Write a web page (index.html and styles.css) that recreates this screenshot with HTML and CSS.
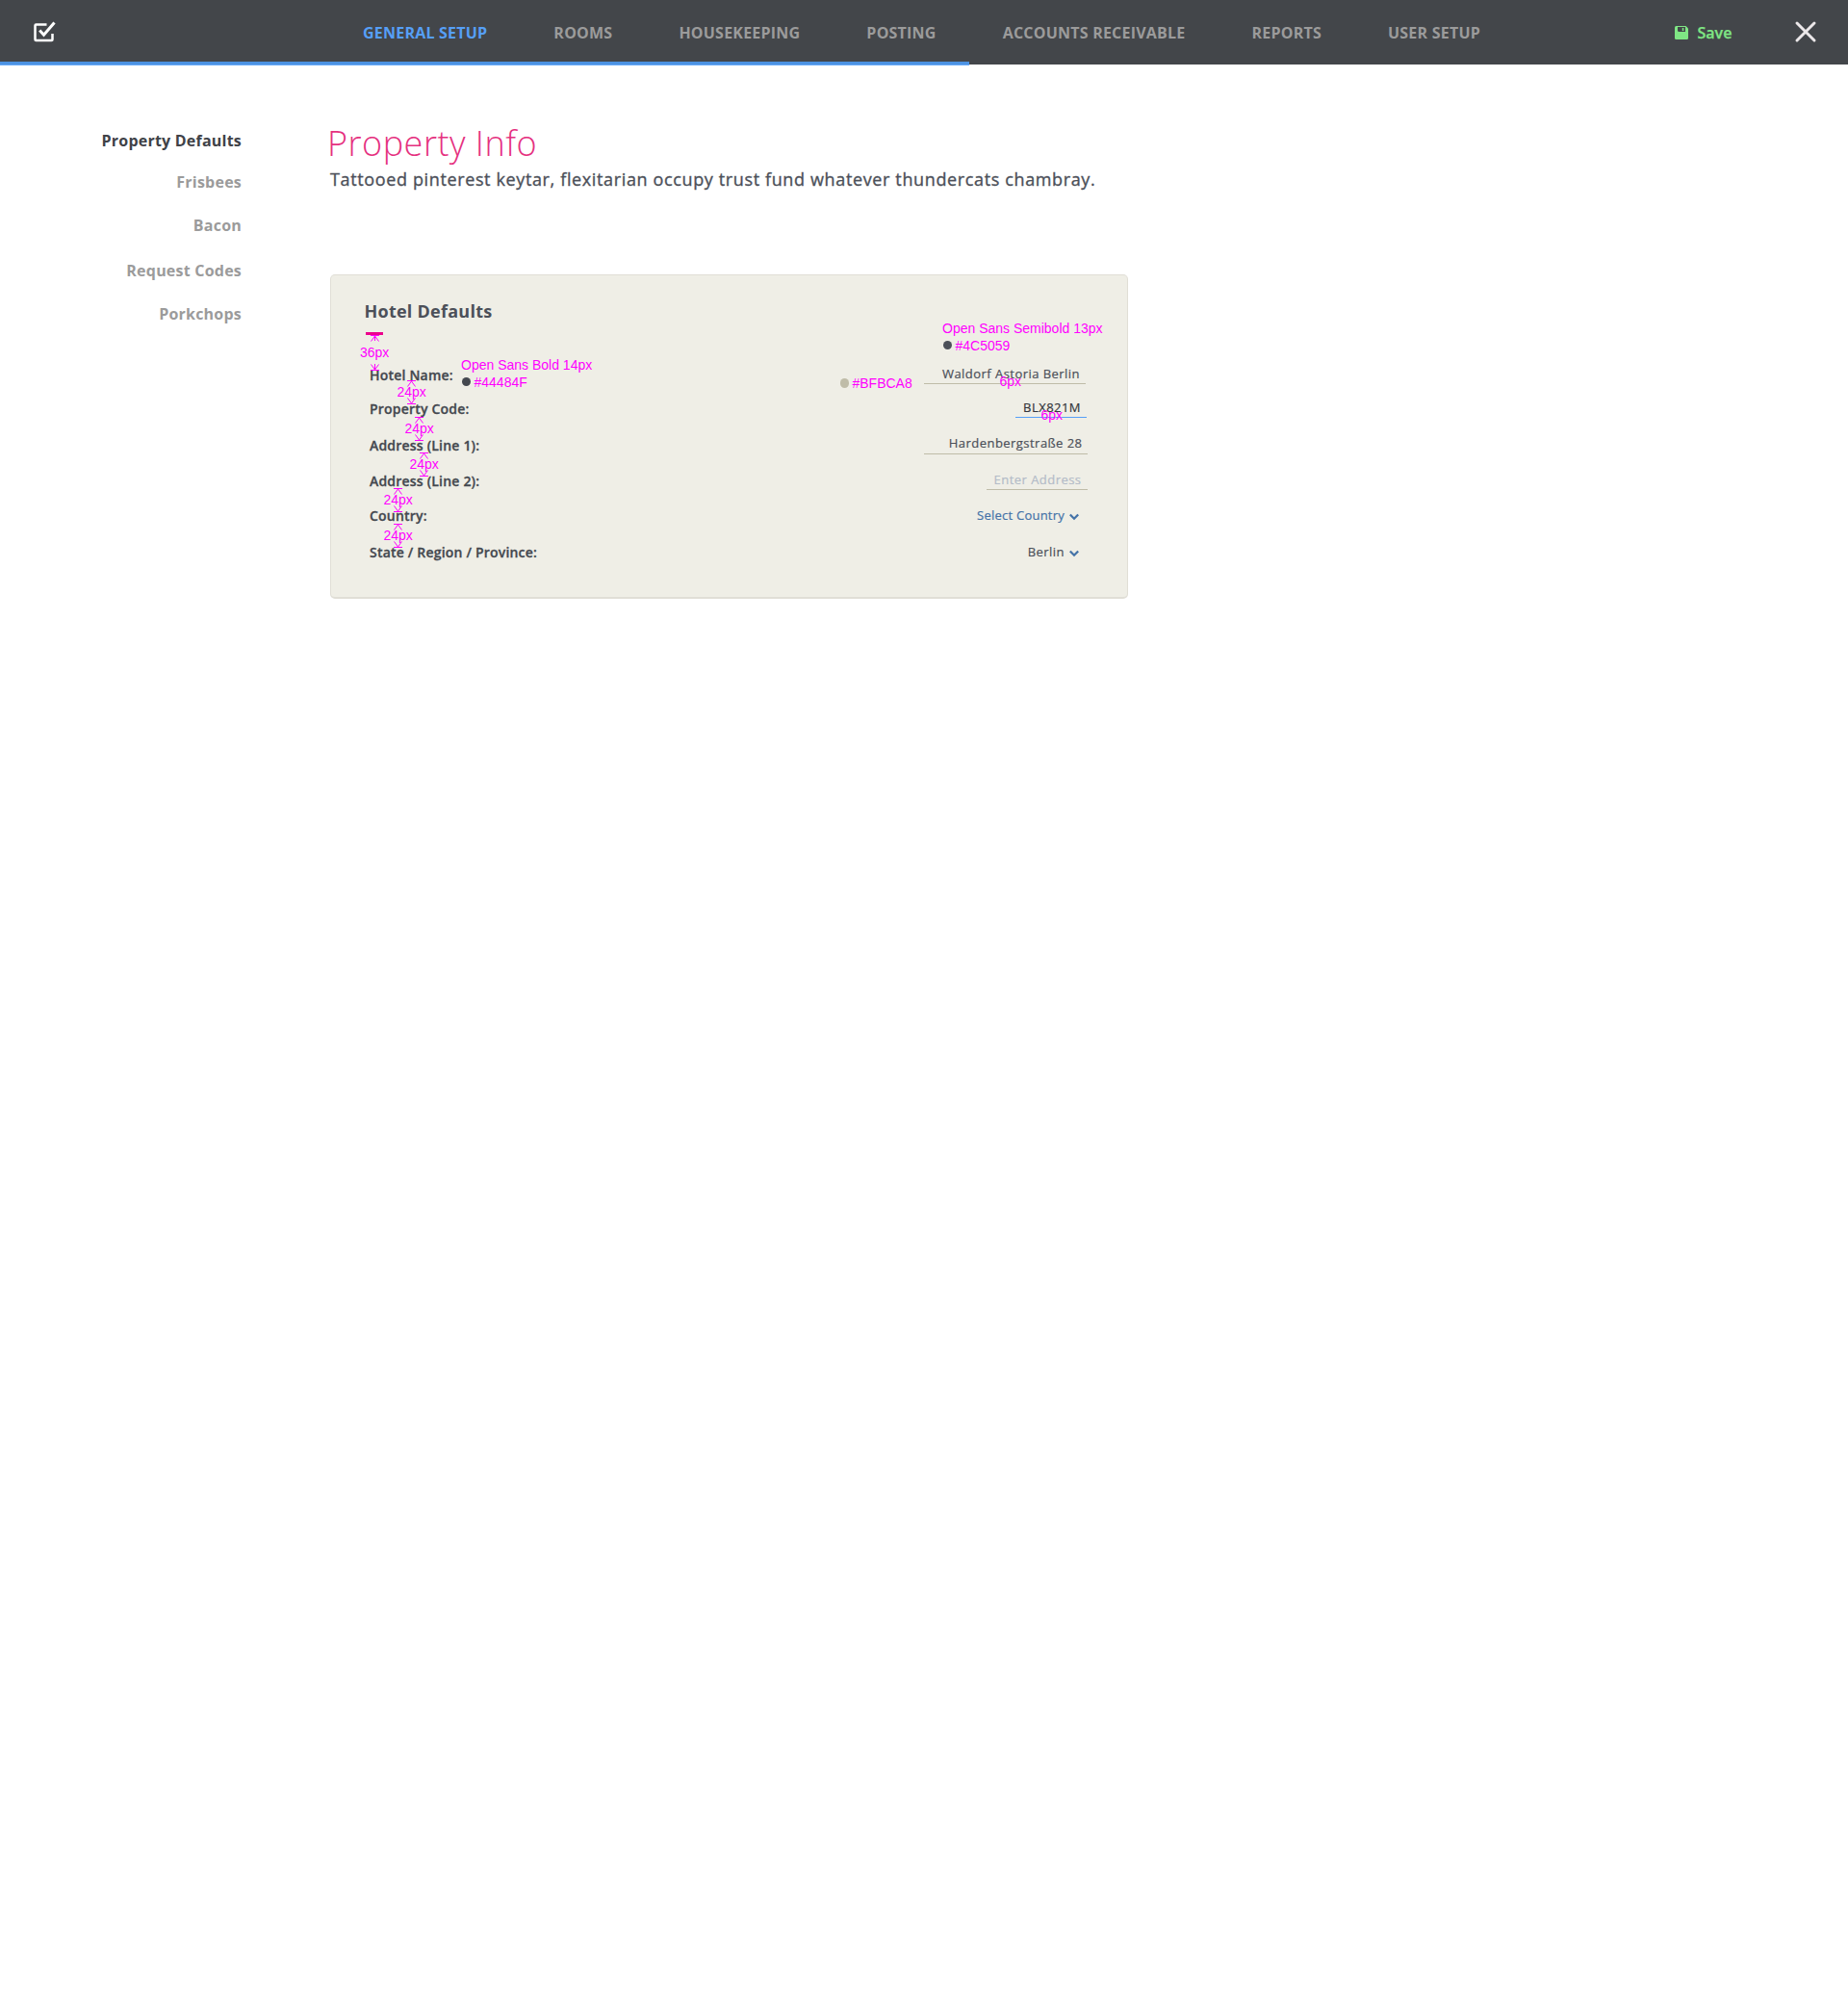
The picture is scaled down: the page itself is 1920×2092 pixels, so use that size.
FILE: index.html
```
<!DOCTYPE html>
<html lang="en">
<head>
<meta charset="utf-8">
<title>Property Info</title>
<link rel="stylesheet" href="styles.css">
</head>
<body>
<header class="topbar">
  <svg class="logo" width="26" height="28" viewBox="0 0 26 28" fill="none" stroke="#fff">
    <path d="M14.500 5.500H3.500Q2.500 5.500 2.500 6.500V21Q2.500 22 3.500 22H19.500Q20.500 22 20.500 21V15" stroke-width="2.500"/>
    <path d="M7.200 11.500L11.500 16.200L22.500 3.500" stroke-width="3"/>
  </svg>
  <nav class="tabs">
    <a class="tab tab-active">GENERAL SETUP</a>
    <a class="tab">ROOMS</a>
    <a class="tab">HOUSEKEEPING</a>
    <a class="tab">POSTING</a>
    <a class="tab">ACCOUNTS RECEIVABLE</a>
    <a class="tab">REPORTS</a>
    <a class="tab">USER SETUP</a>
  </nav>
  <a class="save">
    <svg width="14" height="14" viewBox="0 0 14 14"><path d="M1.500 0H11.500L14 2.500V12.500Q14 14 12.500 14H1.500Q0 14 0 12.500V1.500Q0 0 1.500 0Z" fill="#7fe684"/><path d="M3 1H11V6H4.500Q3 6 3 4.500Z" fill="#43464a"/><rect x="7.800" y="2" width="1.500" height="3" fill="#7fe684"/></svg>
    <span>Save</span>
  </a>
  <svg class="close" width="24" height="24" viewBox="0 0 24 24"><path d="M3 3L21 21M21 3L3 21" stroke="#ece8ea" stroke-width="3" stroke-linecap="round"/></svg>
  <div class="progress"></div>
</header>
<div class="page">
  <aside class="side">
    <a class="side-item side-active">Property Defaults</a>
    <a class="side-item">Frisbees</a>
    <a class="side-item">Bacon</a>
    <a class="side-item">Request Codes</a>
    <a class="side-item">Porkchops</a>
  </aside>
  <main class="content">
    <h1>Property Info</h1>
    <p class="tagline">Tattooed pinterest keytar, flexitarian occupy trust fund whatever thundercats chambray.</p>
    <section class="card">
      <h2>Hotel Defaults</h2>
      <div class="accent"></div>
      <div class="row r1"><span class="label">Hotel Name:</span><span class="value field">Waldorf Astoria Berlin</span></div>
      <div class="row r2"><span class="label">Property Code:</span><span class="value field">BLX821M</span></div>
      <div class="row r3"><span class="label">Address (Line 1):</span><span class="value field">Hardenbergstraße 28</span></div>
      <div class="row r4"><span class="label">Address (Line 2):</span><span class="value field">Enter Address</span></div>
      <div class="row r5"><span class="label">Country:</span><span class="value select">Select Country<svg width="10" height="8" viewBox="0 0 10 8"><path d="M.8 1.500L5 5.700L9.200 1.500"/></svg></span></div>
      <div class="row r6"><span class="label">State / Region / Province:</span><span class="value select">Berlin<svg width="10" height="8" viewBox="0 0 10 8"><path d="M.8 1.500L5 5.700L9.200 1.500"/></svg></span></div>
    </section>
  </main>
</div>
<div class="notes">
  <svg class="arrows" width="1200" height="640" viewBox="0 0 1200 640">
    <defs>
      <path id="up" d="M-4.500 .5H4.500M-4 6.500L0 1L4 6.500"/>
      <path id="down" d="M-4.500 -.5H4.500M-4 -6.500L0 -1L4 -6.500"/>
      <path id="stem" d="M0 0V6"/>
    </defs>
    <use href="#up" x="389.500" y="348"/><use href="#stem" x="389.500" y="348"/>
    <use href="#down" x="389.500" y="385"/><use href="#stem" x="389.500" y="378"/>
    <use href="#up" x="427.500" y="395"/><use href="#down" x="427.500" y="420"/>
    <use href="#up" x="435.500" y="433"/><use href="#down" x="435.500" y="458"/>
    <use href="#up" x="440.500" y="470"/><use href="#down" x="440.500" y="495"/>
    <use href="#up" x="413.500" y="507"/><use href="#down" x="413.500" y="532"/>
    <use href="#up" x="413.500" y="544"/><use href="#down" x="413.500" y="569"/>
  </svg>
  <span class="note n1">36px</span>
  <span class="note n2">24px</span>
  <span class="note n3">24px</span>
  <span class="note n4">24px</span>
  <span class="note n5">24px</span>
  <span class="note n6">24px</span>
  <span class="note n7">Open Sans Bold 14px</span>
  <i class="dot d1"></i><span class="note n8">#44484F</span>
  <span class="note n9">Open Sans Semibold 13px</span>
  <i class="dot d2"></i><span class="note n10">#4C5059</span>
  <i class="dot d3"></i><span class="note n11">#BFBCA8</span>
  <span class="note n12">6px</span>
  <span class="note n13">6px</span>
</div>
</body>
</html>
```
FILE: styles.css
```
* { box-sizing: border-box; }
body { margin: 0; position: relative; background: #fff; font-family: "Open Sans", sans-serif; color: #44484f; }
h1, h2, p { margin: 0; }

.topbar { position: relative; height: 67px; background: #43464a; display: flex; align-items: flex-start; padding-left: 34px; }
.logo { flex: none; margin-top: 20px; }
.tabs { display: flex; gap: 69px; margin: 23px 0 0 317px; width: 1162px; }
.tab { font-size: 16px; line-height: 22px; font-weight: 700; letter-spacing: .22px; color: #9b9b9b; white-space: nowrap; }
.tab-active { color: #569ff7; }
.save { display: flex; align-items: flex-start; margin: 23px 0 0 201px; color: #7fe684; font-size: 16px; font-weight: 600; line-height: 22px; -webkit-text-stroke: .25px; }
.save svg { margin: 4px 9.5px 0 0; }
.close { position: absolute; left: 1864px; top: 21px; }
.progress { position: absolute; left: 0; top: 64px; width: 1007px; height: 4px; background: #4c92e2; border-bottom: 1px solid #69aaf8; }

.page { display: flex; height: 2025px; }
.side { width: 251px; padding-top: 68px; display: flex; flex-direction: column; align-items: flex-end; }
.side-item { font-size: 16px; line-height: 22px; font-weight: 700; letter-spacing: .22px; color: #9b9b9b; margin-bottom: 23px; }
.side-item:nth-child(1) { margin-bottom: 21px; }
.side-item:nth-child(3) { margin-bottom: 25px; }
.side-active { color: #404247; }

.content { margin-left: 92px; padding-top: 57px; }
h1 { margin-left: -3px; font-size: 36px; line-height: 49px; font-weight: 300; letter-spacing: .5px; color: #e5317f; }
.tagline { margin-top: 1px; font-size: 18px; line-height: 25px; letter-spacing: .632px; color: #4c5059; -webkit-text-stroke: .35px; }

.card { margin-top: 86px; width: 829px; height: 337px; background: #efeee6; border: 1px solid #e0ded6; border-bottom-width: 2px; border-radius: 5px; padding: 25px 41px 0 35px; }
h2 { margin-left: -.5px; font-size: 18px; line-height: 25px; font-weight: 700; letter-spacing: .25px; color: #4c5059; }
.accent { width: 18px; height: 3px; margin: 9px 0 32px 1px; background: #ec008c; }
.row { display: flex; justify-content: space-between; align-items: flex-start; padding-left: 5px; }
.label { font-size: 14px; line-height: 20px; font-weight: 600; letter-spacing: .2px; -webkit-text-stroke: .3px; }
.value { font-size: 13px; line-height: 20px; letter-spacing: .46px; color: #4c5059; text-align: right; -webkit-text-stroke: .2px; }
.field { border-bottom: 1px solid #bfbca8; padding-right: 6px; }
.r1 { height: 35px; }
.r2 { height: 38px; }
.r3 { height: 37px; }
.r4 { height: 36px; }
.r5 { height: 38px; }
.r1 .value { width: 168px; margin: -2px 2px 0 0; }
.r2 .value { width: 74px; margin: -2px 1px 0 0; color: #33363b; border-color: #569ff7; }
.r3 .value { width: 170px; margin-top: -3px; padding: 0 5.500px 1px 0; }
.r4 .value { width: 105px; margin-top: -2px; padding-right: 6.500px; color: #b4bcc8; }
.select { display: flex; margin: -1px 9px 0 0; }
.select svg { margin: 8px 0 0 5px; fill: none; stroke: #4573a8; stroke-width: 2.300; }
.r5 .value { color: #4573a8; letter-spacing: .23px; }

.notes { position: absolute; left: 0; top: 0; }
.arrows { position: absolute; left: 0; top: 0; fill: none; stroke: #f0f; stroke-width: 1; }
.note { position: absolute; font: 14px/16px "Liberation Sans", sans-serif; color: #f0f; white-space: nowrap; }
.n1 { left: 374px; top: 358px; }
.n2 { left: 412.500px; top: 399px; }
.n3 { left: 420.500px; top: 437px; }
.n4 { left: 425.500px; top: 474px; }
.n5 { left: 398.500px; top: 511px; }
.n6 { left: 398.500px; top: 548px; }
.n7 { left: 479px; top: 371px; }
.n8 { left: 492.500px; top: 389px; }
.n9 { left: 979px; top: 333px; }
.n10 { left: 992.500px; top: 351px; }
.n11 { left: 885.500px; top: 390px; }
.n12 { left: 1038.500px; top: 388px; }
.n13 { left: 1081.500px; top: 423px; }
.dot { position: absolute; width: 9.500px; height: 9.500px; border-radius: 50%; }
.d1 { left: 479.800px; top: 391.800px; background: #44484f; }
.d2 { left: 979.800px; top: 353.800px; background: #4c5059; }
.d3 { left: 872.800px; top: 393px; background: #bfbca8; }
```
